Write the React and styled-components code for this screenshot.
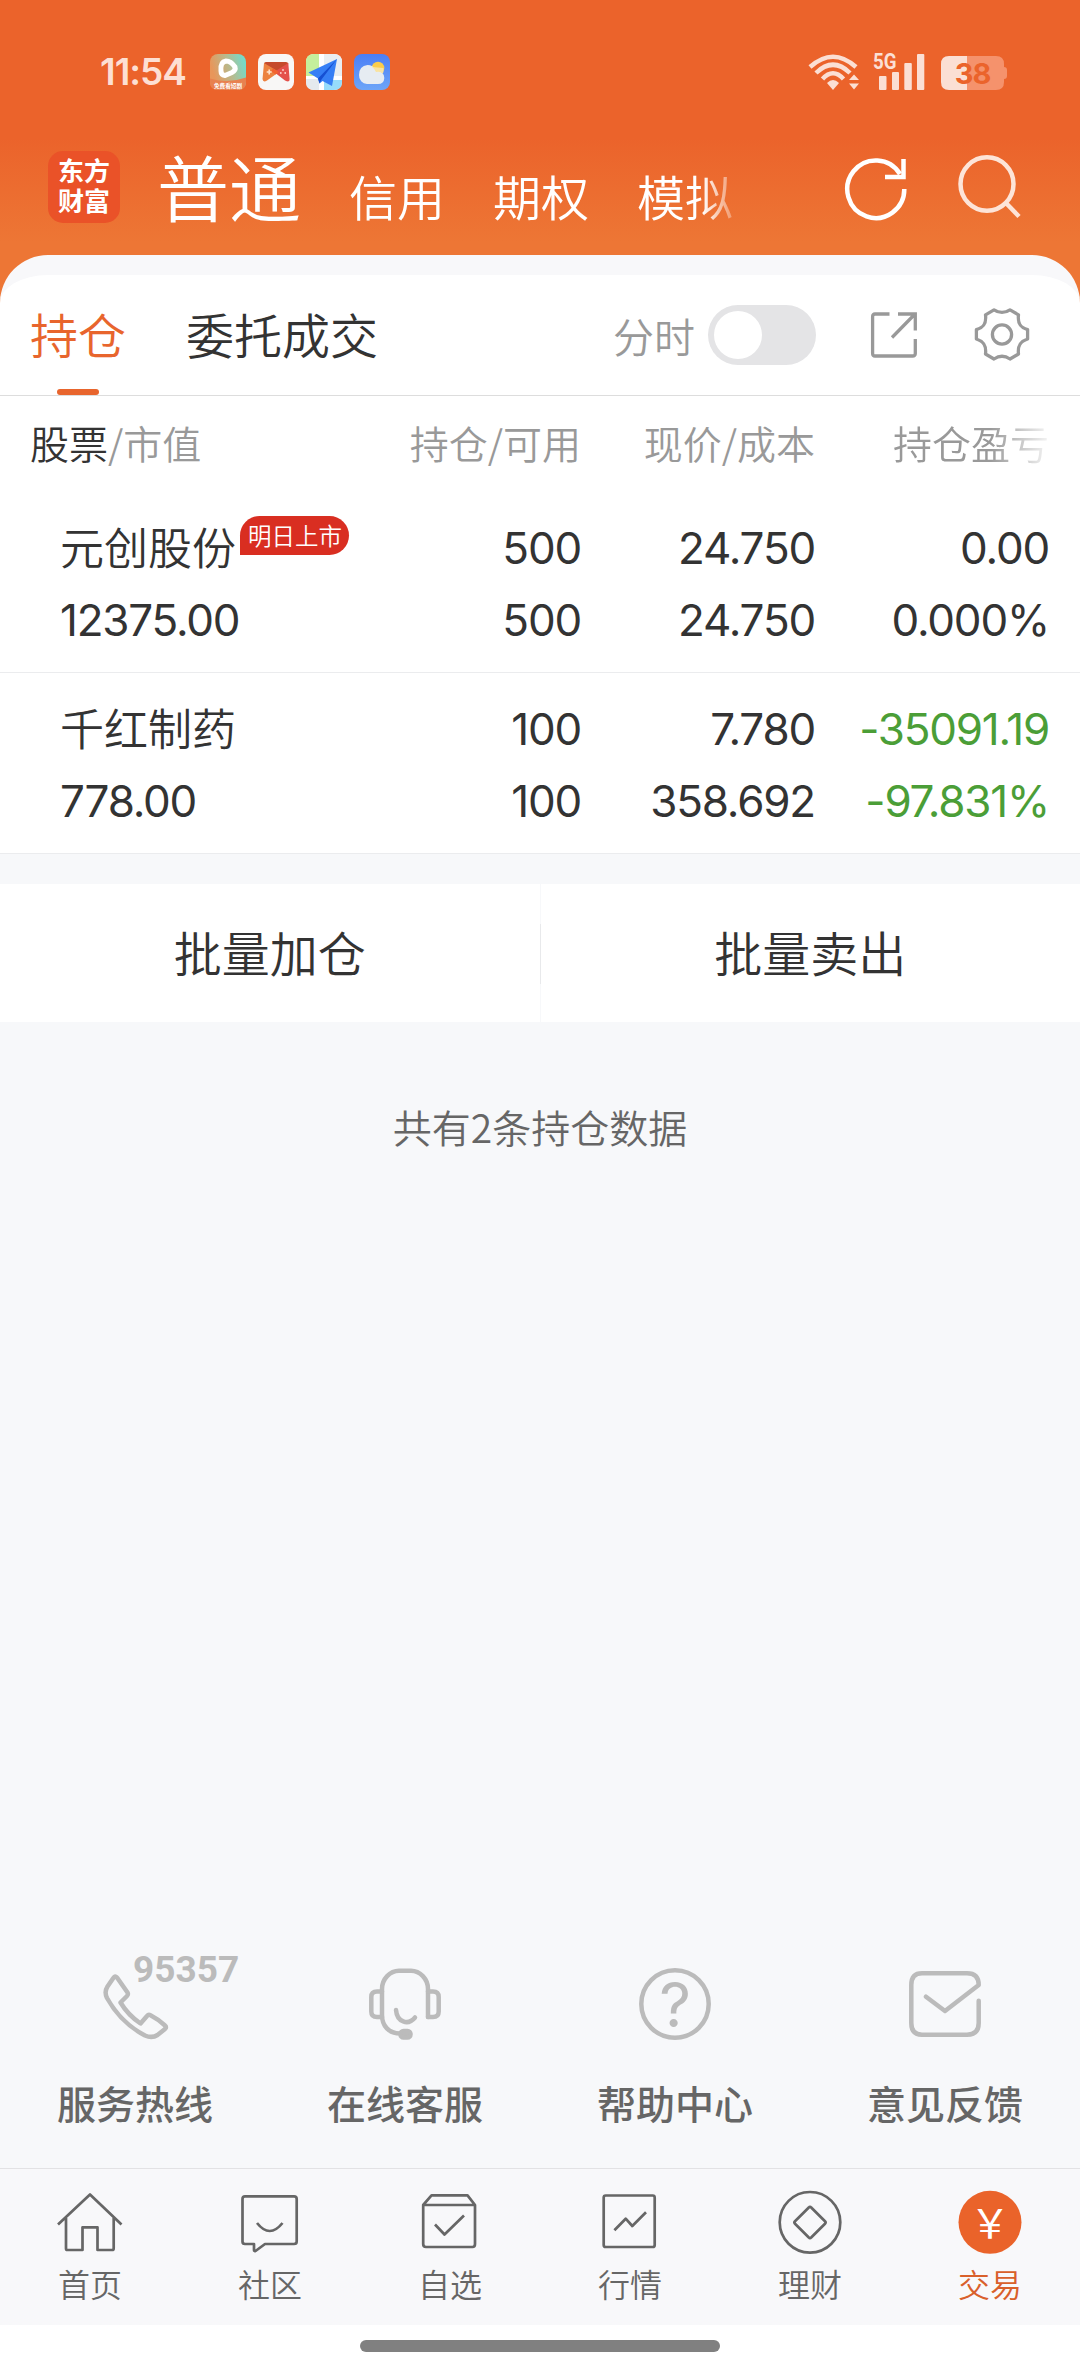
import React from 'react';
import styled, { createGlobalStyle } from 'styled-components';

const GlobalStyle = createGlobalStyle`
    * {
        box-sizing: border-box;
    }

    body {
        margin: 0;
        font-family: 'Noto Sans CJK SC', sans-serif;
        font-weight: 350;
        color: #333;
        background: #fff;
    }

    svg {
        display: block;
        flex: none;
    }
`

const Screen = styled.div`
    display: flex;
    flex-direction: column;
    width: 1080px;
    height: 2373px;
    overflow: hidden;
    background: linear-gradient(#eb632b 0, #eb632b 138px, #ed7635 242px, #ed7635 320px, #f7f8fa 320px);
`

const StatusBar = styled.div`
    display: flex;
    align-items: center;
    height: 144px;
    padding: 0 72px 0 100px;
`

const Clock = styled.div`
    width: 110px;
    font: 600 37px/40px Inter, sans-serif;
    letter-spacing: -1px;
    color: #fddfd3;
`

const AppIcons = styled.div`
    display: flex;
    gap: 12px;
    flex: 1;
`

const Header = styled.div`
    display: flex;
    align-items: center;
    height: 111px;
    padding: 0 48px;
    color: #fff;
`

const Logo = styled.div`
    display: flex;
    flex-direction: column;
    align-items: center;
    justify-content: center;
    width: 72px;
    height: 72px;
    margin-top: -25px;
    border-radius: 15px;
    background: #ea5228;
    font-family: 'Liberation Sans', 'Noto Sans CJK SC', sans-serif;
    font-size: 26px;
    font-weight: 700;
    line-height: 30px;
`

const Markets = styled.div`
    display: flex;
    align-items: baseline;
    gap: 48px;
    width: 612px;
    margin: -20px 72px 0 37px;
    white-space: nowrap;
    -webkit-mask-image: linear-gradient(90deg, #000 545px, transparent 588px);
    mask-image: linear-gradient(90deg, #000 545px, transparent 588px);
`

const Market = styled.span`
    font-size: ${props => props.$active ? 72 : 48}px;
    line-height: 106px;
`

const HeaderActions = styled.div`
    display: flex;
    gap: 44px;
    margin: -24px 0 0 1px;
`

const Panel = styled.div`
    border-radius: 48px 48px 0 0;
    overflow: hidden;
    background: #fff;
    border-top: 20px solid #f8f8fa;
`

const TabBar = styled.div`
    display: flex;
    align-items: center;
    height: 121px;
    padding: 0 48px 0 30px;
    border-bottom: 1px solid #ddd;
`

const Tab = styled.div`
    display: flex;
    flex-direction: column;
    align-items: center;
    justify-content: space-between;
    height: 120px;
    padding-top: 23px;
    margin-right: 60px;
    font-size: 48px;
    line-height: 70px;
    color: ${props => props.$active ? '#e8652d' : '#333'};

    &::after {
        content: '';
        width: 42px;
        height: 6px;
        border-radius: 3px;
        background: ${props => props.$active ? '#e8652d' : 'transparent'};
    }
`

const TabTools = styled.div`
    display: flex;
    align-items: center;
    gap: 54px;
    margin-left: auto;
`

const SwitchLabel = styled.div`
    display: flex;
    align-items: center;
    gap: 13px;
    font-size: 41px;
    line-height: 58px;
    color: #999;
`

const Switch = styled.div`
    width: 108px;
    height: 60px;
    padding: 6px;
    border-radius: 30px;
    background: #e4e4e6;

    &::after {
        content: '';
        display: block;
        width: 48px;
        height: 48px;
        border-radius: 50%;
        background: #fff;
    }
`

const Columns = styled.div`
    display: grid;
    grid-template-columns: 1fr 200px 234px 234px;
    padding-right: 31px;
    text-align: right;
`

const TableHead = styled(Columns)`
    height: 96px;
    padding-left: 30px;
    font-size: 39px;
    line-height: 93px;
    color: #999;
    white-space: nowrap;

    & > :first-child {
        text-align: left;
    }

    & b {
        font-weight: 350;
        color: #333;
    }
`

const FadedHead = styled.span`
    -webkit-mask-image: linear-gradient(90deg, #000 175px, rgba(0, 0, 0, .1) 234px);
    mask-image: linear-gradient(90deg, #000 175px, rgba(0, 0, 0, .1) 234px);
`

const HoldingRow = styled(Columns)`
    height: 181px;
    padding-left: 60px;
    padding-top: 20px;
    border-bottom: 1px solid #ebecee;
`

const Cell = styled.div`
    font-family: Inter, 'Noto Sans CJK SC', sans-serif;
    font-weight: 400;
    font-size: 44px;
    line-height: 72px;
    letter-spacing: -1.2px;
    white-space: nowrap;
    text-align: ${props => props.$left ? 'left' : 'right'};
    color: ${props => props.$loss ? '#4b9e37' : '#333'};
`

const StockName = styled.div`
    display: flex;
    height: 72px;
    font-weight: 350;
    line-height: 74px;
    letter-spacing: 0;
`

const Badge = styled.span`
    height: 39px;
    margin: 4px 0 0 4px;
    padding: 0 7px 0 8px;
    border-radius: 20px 20px 20px 0;
    background: #d92e21;
    font-size: 23.5px;
    line-height: 41px;
    color: #fff;
`

const BatchActions = styled.div`
    display: flex;
    height: 138px;
    margin-top: 30px;
    background: #fff;
`

const BatchButton = styled.div`
    flex: 1;
    text-align: center;
    font-size: 48px;
    line-height: 135px;

    & + & {
        border-left: 1px solid;
        border-image: linear-gradient(#f7f8fa 29%, #e8e9eb 29%, #e8e9eb 72%, #f7f8fa 72%) 1;
    }
`

const Summary = styled.div`
    margin-top: 76px;
    text-align: center;
    font-size: 39px;
    line-height: 56px;
    color: #666;
`

const Services = styled.div`
    display: flex;
    margin-top: auto;
    height: 218px;
`

const Service = styled.div`
    position: relative;
    display: flex;
    flex-direction: column;
    align-items: center;
    gap: 32px;
    width: 270px;
    padding-top: 18px;
    font-size: 39px;
    font-weight: 500;
    line-height: 60px;
    color: #666;
`

const HotlineNumber = styled.span`
    position: absolute;
    top: 0;
    left: 133px;
    font: 700 37px/40px Roboto, sans-serif;
    color: #bbb;
`

const NavBar = styled.div`
    display: flex;
    height: 157px;
    border-top: 1px solid #e2e2e4;
    background: #f8f8fa;
`

const NavItem = styled.div`
    display: flex;
    flex-direction: column;
    align-items: center;
    width: 180px;
    padding-top: 17px;
    font-size: 32px;
    line-height: 50px;
    color: ${props => props.$active ? '#d9602b' : '#666'};
`

const GestureArea = styled.div`
    display: flex;
    justify-content: center;
    height: 48px;
    padding-top: 15px;
    background: #fff;

    &::after {
        content: '';
        width: 360px;
        height: 12px;
        border-radius: 6px;
        background: #808080;
    }
`

const VideoAppIcon = () => (
    <svg width="36" height="36" viewBox="0 0 36 36">
        <defs>
            <linearGradient id="video" x1="0" y1=".6" x2="1" y2=".3">
                <stop offset=".1" stopColor="#e8965a" />
                <stop offset=".55" stopColor="#b9b98c" />
                <stop offset="1" stopColor="#72dccb" />
            </linearGradient>
        </defs>
        <rect width="36" height="36" rx="8" fill="url(#video)" />
        <path d="M0 24.5Q18 30 36 23.5V28Q36 36 28 36H8Q0 36 0 28Z" fill="#e8814f" />
        <path d="M16 7Q21 7 25 13Q26 16 22 18.500L15 21.500Q11 21 11 17Q10 8 16 7Z" fill="none" stroke="#fff" strokeWidth="5" strokeLinejoin="round" />
        <text x="18" y="34" textAnchor="middle" fontSize="5.600" fontWeight="700" fill="#fff">免费看短剧</text>
    </svg>
)

const GameAppIcon = () => (
    <svg width="36" height="36" viewBox="0 0 36 36">
        <rect width="36" height="36" rx="8" fill="#f8f7f6" />
        <path d="M8 8H28Q30 8 30.300 10L18 20L6 10Q6 8 8 8Z" fill="#c54a2c" />
        <path d="M6 9L21 18L9 26.500Q5 29 4.500 25Z" fill="#ec8240" />
        <path d="M30.300 9L16 18L27 26.500Q32 29 31.600 25Z" fill="#e4504a" />
        <path d="M15 14.500L21 18L17.500 20.500L13 17Z" fill="#f2622f" />
        <path d="M11.200 15.500V20.500M8.700 18H13.700" stroke="#ffe3cc" strokeWidth="1.600" />
        <g fill="#ffd5ce">
            <circle cx="25" cy="16" r=".9" />
            <circle cx="22.800" cy="19" r=".9" />
            <circle cx="27.200" cy="19" r=".9" />
        </g>
    </svg>
)

const MapAppIcon = () => (
    <svg width="36" height="36" viewBox="0 0 36 36">
        <rect width="36" height="36" rx="8" fill="#fff" />
        <path d="M8 0H13V22H0V8Q0 0 8 0Z" fill="#c5ef9c" />
        <path d="M18 0H28Q36 0 36 8V22H18Z" fill="#e9eef1" />
        <path d="M18 26H36V28Q36 36 28 36H18Z" fill="#96dcfb" />
        <path d="M0 25H13V36H8Q0 36 0 28Z" fill="#e5eaee" />
        <path d="M31 5L2.500 18.500L12 24.500L13.500 29.500L16.500 27L26 32Z" fill="#367ff5" />
        <path d="M31 5L12 24.500L13.500 29.500L15.500 25.500Z" fill="#1650d2" />
    </svg>
)

const WeatherAppIcon = () => (
    <svg width="36" height="36" viewBox="0 0 36 36">
        <defs>
            <linearGradient id="sky" x2="0" y2="1">
                <stop stopColor="#4a7ef6" />
                <stop offset="1" stopColor="#6da5f8" />
            </linearGradient>
        </defs>
        <rect width="36" height="36" rx="8" fill="url(#sky)" />
        <circle cx="24" cy="14" r="6.300" fill="#fbcd4b" />
        <path d="M13 30A8 8.500 0 0 1 5 21Q5 12 13.500 11Q19 11 21.500 15.500Q30 17 30.300 24Q30 30 24 30Z" fill="#e6ecf2" />
        <path d="M18 13Q21 15 22 18Q26 17 29 19.500Q30 17 29.500 14Z" fill="#f9e3a0" />
    </svg>
)

const StatusIcons = () => (
    <svg width="200" height="64" viewBox="808 40 200 64" fill="#fbdfd4">
        <g fill="none" stroke="#fbdfd4" strokeWidth="4.500">
            <path d="M810 67Q833 46.500 856 67" />
            <path d="M816 73Q833 56.500 850 73" />
            <path d="M822.500 79Q833 67.500 843.500 79" />
        </g>
        <path d="M827 83Q833 77 839 83L833 90Z" />
        <path d="M849 80L854 74.500L859 80ZM849 83.500H859L854 89.500Z" />
        <text x="873" y="69" fontFamily="Roboto" fontWeight="700" fontSize="22" textLength="23.500" lengthAdjust="spacingAndGlyphs">5G</text>
        <rect x="879" y="76" width="7.500" height="14" rx="1" />
        <rect x="892" y="72" width="7" height="18" rx="1" />
        <rect x="904.300" y="63" width="7.500" height="27" rx="1" />
        <rect x="917" y="54" width="7.300" height="36" rx="1" />
        <path d="M967 56H996Q1004 56 1004 64V67Q1007 67 1007 70V76Q1007 79 1004 79V82Q1004 90 996 90H967Z" fill="#f5926c" />
        <path d="M967 56H949Q941 56 941 64V82Q941 90 949 90H967Z" />
        <text x="972.500" y="84" textAnchor="middle" fontFamily="Inter" fontWeight="700" fontSize="29" fill="#eb632b" letterSpacing="-1">38</text>
    </svg>
)

const RefreshIcon = () => (
    <svg width="68" height="68" viewBox="842 154 68 68" fill="none" stroke="#fff" strokeWidth="4.500">
        <path d="M904.300 189A28.500 28.800 0 1 1 900 174" />
        <path d="M903.500 159V177H885" />
    </svg>
)

const SearchIcon = () => (
    <svg width="68" height="68" viewBox="954 154 68 68" fill="none" stroke="#fde4d8" strokeWidth="4.500">
        <ellipse cx="987" cy="184" rx="26.500" ry="26.700" />
        <path d="M1005.500 202.500L1019 216.500" />
    </svg>
)

const ShareIcon = () => (
    <svg width="48" height="48" viewBox="0 0 48 48" fill="none" stroke="#999" strokeWidth="3.300">
        <path d="M19.500 3H5Q2.600 3 2.600 5.500V42.500Q2.600 45 5 45H42.500Q45.300 45 45.300 42.500V28" />
        <path d="M28 3H45.300V19.500M22 26.500L45 3" />
    </svg>
)

const GearIcon = () => (
    <svg width="60" height="60" viewBox="0 0 60 60" fill="none" stroke="#999" strokeWidth="3.300" strokeLinejoin="round">
        <path d="M22 4.800Q30 10 38 4.800L46.500 9.800C45.500 18 48 22.500 55.600 24.600V34C48 36.500 45.500 41 46.500 49L38 54Q30 48.500 22 54L13.500 49C14.500 41 12 36.500 4.400 34V24.600C12 22.500 14.500 18 13.500 9.800Z" />
        <circle cx="30" cy="29.500" r="9.600" />
    </svg>
)

const ServiceSvg = ({ children }) => (
    <svg width="72" height="72" viewBox="0 0 72 72" fill="none" stroke="#bbb" strokeWidth="4.500" strokeLinecap="round" strokeLinejoin="round">
        {children}
    </svg>
)

const services = [
    {
        label: '服务热线',
        number: '95357',
        icon: <path d="M18 9.500L28.500 24.500Q29.500 26.500 28 28L21.500 34.500Q29 47 41.500 55.500L48 48Q49.500 46 51.500 47.200Q59 51 66 57.500Q68 59 66 61L58.500 67Q53 70.500 46 67.500Q22 55 8 30Q5 24 8.500 18.500L14.500 9.800Q16 7.500 18 9.500Z" />
    },
    {
        label: '在线客服',
        icon: <>
            <path d="M59 49V21C59 11 51 2.800 42 2.800H30C21 2.800 13 11 13 21V47C13 58 20 65.500 31 65.500" />
            <path d="M13 23.500H8Q2.300 23.500 2.300 29V43.500Q2.300 49 8 49H13M59 23.500H64Q69.700 23.500 69.700 29V43.500Q69.700 49 64 49H59" />
            <path d="M27 42C28 54 39 58 46 49.500" />
            <rect x="31.500" y="63" width="10" height="6.500" rx="3" fill="#bbb" />
        </>
    },
    {
        label: '帮助中心',
        icon: <>
            <circle cx="36" cy="36" r="33.700" />
            <text x="36" y="58.500" textAnchor="middle" fontFamily="Inter" fontWeight="400" fontSize="62" fill="#bbb" stroke="none">?</text>
        </>
    },
    {
        label: '意见反馈',
        icon: <path d="M69.700 32.700V55Q69.700 66.700 58 66.700H13Q2.300 66.700 2.300 55V17Q2.300 5.300 13 5.300H58Q69.700 5.300 69.700 17L36 43L17 28.700" />
    }
]

const NavSvg = ({ children }) => (
    <svg width="72" height="72" viewBox="0 0 72 72" fill="none" stroke="#666" strokeWidth="2.700" strokeLinejoin="round">
        {children}
    </svg>
)

const navItems = [
    {
        label: '首页',
        icon: <path d="M4 38.500L36 8.500L67.500 38.500M12 32V62.500Q12 64 13.500 64H28.500V41.300H43.500V64H58Q59.700 64 59.700 62.500V32" />
    },
    {
        label: '社区',
        icon: <path d="M11 10.300H60Q62.700 10.300 62.700 13V55.500Q62.700 58 60 58H31L21.500 65Q20 65.500 20 64V58H11Q8.500 58 8.500 55.500V13Q8.500 10.300 11 10.300ZM23 37Q35.700 53 48.500 37" />
    },
    {
        label: '自选',
        icon: <path d="M9.200 19L17.500 9.300H53.500L61 19V58Q61 61 58.500 61H12Q9.200 61 9.200 58ZM9.200 19H61M21 38.500L30.500 48.500L50 29.500" />
    },
    {
        label: '行情',
        icon: <>
            <rect x="9.700" y="9.500" width="51" height="51.500" rx="2" />
            <path d="M20.400 44.300L31.700 32.700L38.300 40L52 26.300" />
        </>
    },
    {
        label: '理财',
        icon: <>
            <circle cx="36" cy="36.300" r="30.300" />
            <path d="M34.800 21.500Q36 20 37.200 21.500L51 35.300Q52.200 36.500 51 37.700L37.200 51.500Q36 53 34.800 51.500L21 37.700Q19.800 36.500 21 35.300Z" />
        </>
    },
    {
        label: '交易',
        active: true,
        icon: <>
            <circle cx="36" cy="36.300" r="31.500" fill="#ea632a" stroke="none" />
            <text x="36" y="52" textAnchor="middle" fontFamily="Noto Sans CJK SC" fontWeight="400" fontSize="40" fill="#fff" stroke="none">￥</text>
        </>
    }
]

const holdings = [
    { name: '元创股份', tag: '明日上市', value: '12375.00', amount: ['500', '500'], price: ['24.750', '24.750'], profit: ['0.00', '0.000%'] },
    { name: '千红制药', value: '778.00', amount: ['100', '100'], price: ['7.780', '358.692'], profit: ['-35091.19', '-97.831%'], loss: true }
]

const renderPair = (pair, loss) => (
    <Cell $loss={loss}>
        <div>{pair[0]}</div>
        <div>{pair[1]}</div>
    </Cell>
)

const Holding = ({ item }) => (
    <HoldingRow>
        <Cell $left>
            <StockName>
                {item.name}
                {item.tag && <Badge>{item.tag}</Badge>}
            </StockName>
            <div>{item.value}</div>
        </Cell>
        {renderPair(item.amount)}
        {renderPair(item.price)}
        {renderPair(item.profit, item.loss)}
    </HoldingRow>
)

const App = () => (
    <Screen>
        <GlobalStyle />
        <StatusBar>
            <Clock>11:54</Clock>
            <AppIcons>
                <VideoAppIcon />
                <GameAppIcon />
                <MapAppIcon />
                <WeatherAppIcon />
            </AppIcons>
            <StatusIcons />
        </StatusBar>
        <Header>
            <Logo>
                <span>东方</span>
                <span>财富</span>
            </Logo>
            <Markets>
                <Market $active>普通</Market>
                <Market>信用</Market>
                <Market>期权</Market>
                <Market>模拟</Market>
            </Markets>
            <HeaderActions>
                <RefreshIcon />
                <SearchIcon />
            </HeaderActions>
        </Header>
        <Panel>
            <TabBar>
                <Tab $active>持仓</Tab>
                <Tab>委托成交</Tab>
                <TabTools>
                    <SwitchLabel>
                        分时
                        <Switch />
                    </SwitchLabel>
                    <ShareIcon />
                    <GearIcon />
                </TabTools>
            </TabBar>
            <TableHead>
                <span><b>股票</b>/市值</span>
                <span>持仓/可用</span>
                <span>现价/成本</span>
                <FadedHead>持仓盈亏</FadedHead>
            </TableHead>
            {holdings.map(item => <Holding key={item.name} item={item} />)}
        </Panel>
        <BatchActions>
            <BatchButton>批量加仓</BatchButton>
            <BatchButton>批量卖出</BatchButton>
        </BatchActions>
        <Summary>共有2条持仓数据</Summary>
        <Services>
            {services.map(service => (
                <Service key={service.label}>
                    <ServiceSvg>{service.icon}</ServiceSvg>
                    {service.number && <HotlineNumber>{service.number}</HotlineNumber>}
                    {service.label}
                </Service>
            ))}
        </Services>
        <NavBar>
            {navItems.map(item => (
                <NavItem key={item.label} $active={item.active}>
                    <NavSvg>{item.icon}</NavSvg>
                    {item.label}
                </NavItem>
            ))}
        </NavBar>
        <GestureArea />
    </Screen>
)

export default App;
